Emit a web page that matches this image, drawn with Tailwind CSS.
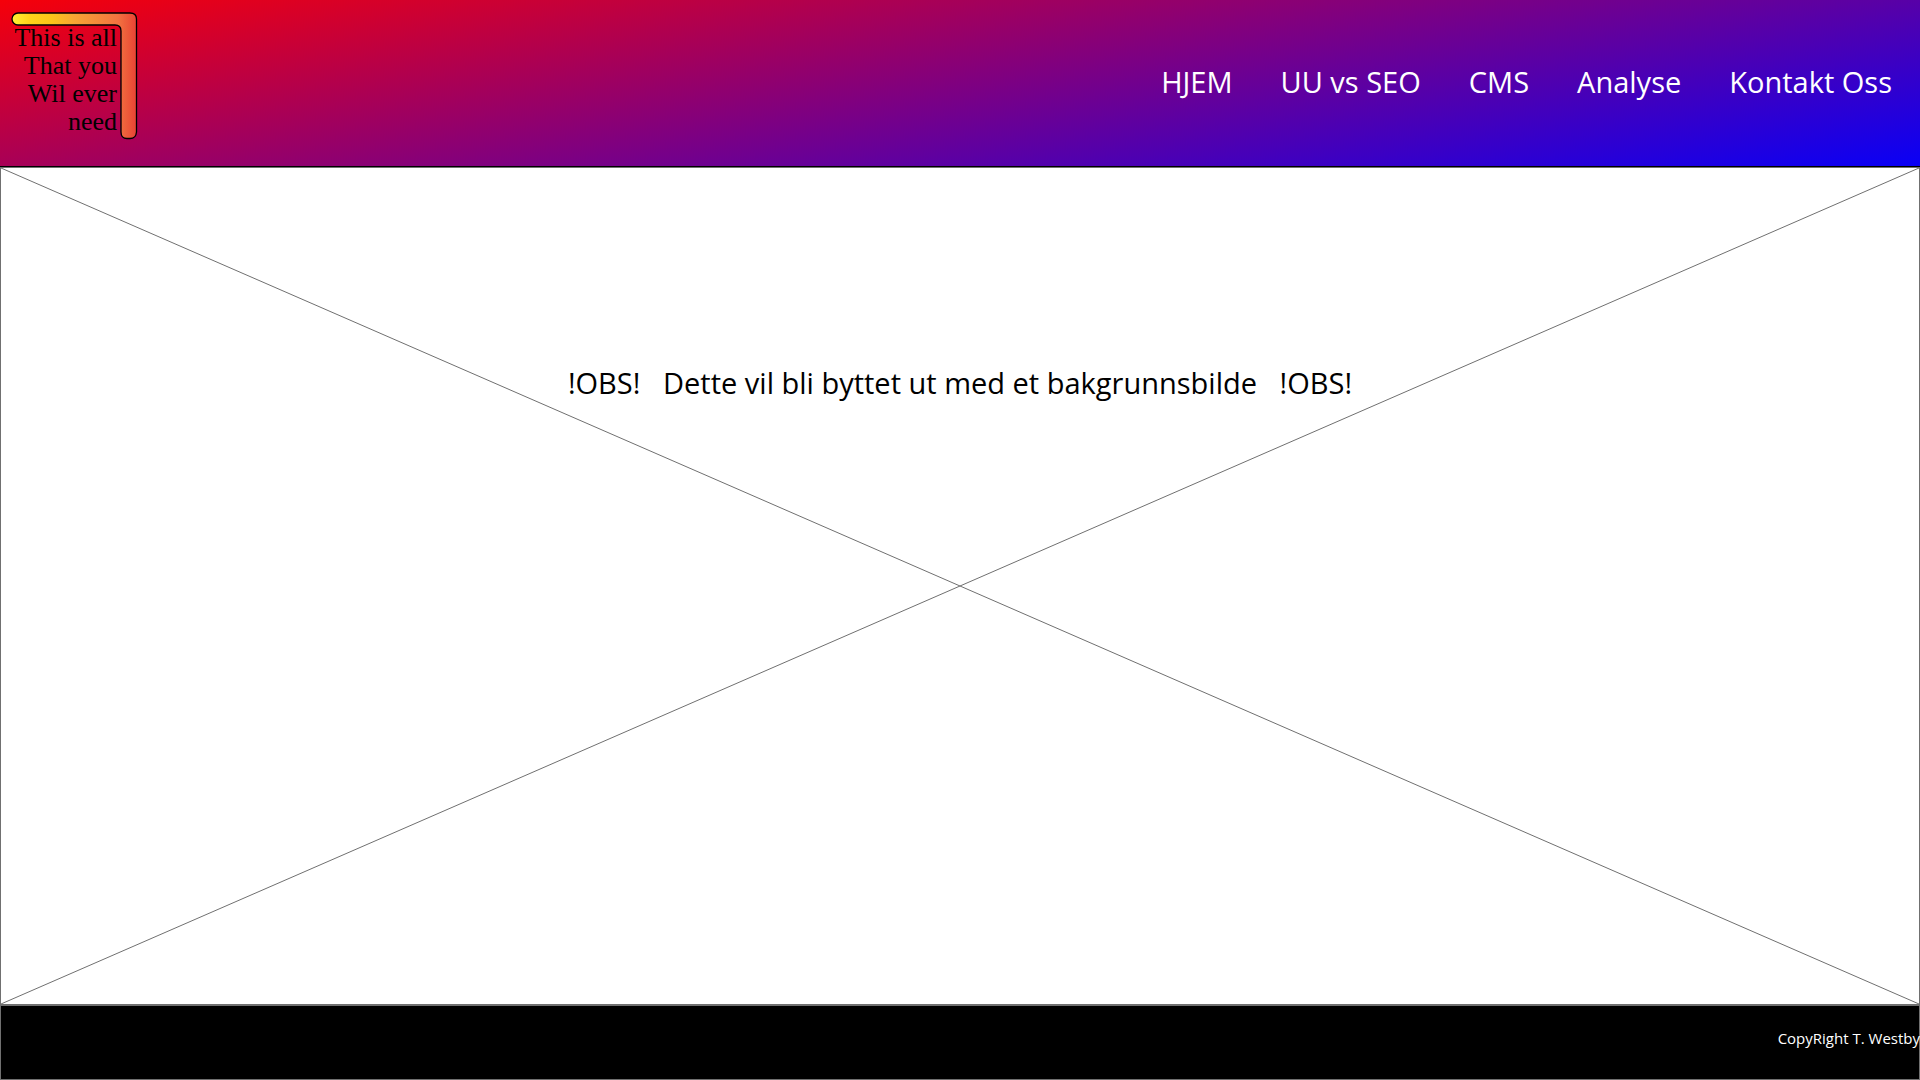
<!DOCTYPE html>
<html lang="no">
<head>
<meta charset="utf-8">
<meta name="viewport" content="width=device-width, initial-scale=1">
<title>Hjem</title>
<script src="https://cdn.jsdelivr.net/npm/@tailwindcss/browser@4"></script>
</head>
<body class="flex min-h-screen flex-col bg-white font-['Segoe_UI','Open_Sans',sans-serif] text-black">
  <header class="flex h-[167px] shrink-0 items-start justify-between border-b border-black bg-[linear-gradient(170deg,#ff0000_-4%,#0000ff_104%)] pr-7 pl-[11px]">
    <a href="#" class="relative mt-3 block h-32 w-[127px]">
      <svg class="absolute inset-0 h-full w-full" viewBox="0 0 127 128" aria-hidden="true">
        <defs>
          <linearGradient id="bar" x1="0" x2="1" y1="0" y2="0">
            <stop offset="0" stop-color="#fff033"/>
            <stop offset="0.14" stop-color="#ffd21a"/>
            <stop offset="0.32" stop-color="#fcc419"/>
            <stop offset="0.5" stop-color="#f7a534"/>
            <stop offset="0.85" stop-color="#f27340"/>
            <stop offset="1" stop-color="#e94334"/>
          </linearGradient>
        </defs>
        <path d="M7 1H119Q125.500 1 125.500 7V120Q125 126.500 119 126.500H116Q110 126.500 110 120V19Q110 13 104 13H7A6 6 0 0 1 7 1Z" fill="url(#bar)" stroke="#000" stroke-width="1.300"/>
      </svg>
      <span class="relative block pt-3 pr-[21px] text-right font-['Liberation_Serif',serif] text-[26px] leading-7 whitespace-nowrap">This is all<br>That you<br>Wil ever<br>need</span>
    </a>
    <nav class="mt-[62px] flex gap-12 text-[29px] leading-10 text-white">
      <a href="#">HJEM</a>
      <a href="#">UU vs SEO</a>
      <a href="#">CMS</a>
      <a href="#">Analyse</a>
      <a href="#">Kontakt Oss</a>
    </nav>
  </header>
  <main class="relative flex grow justify-center border border-[#707070]">
    <svg class="absolute inset-0 h-full w-full" viewBox="0 0 100 100" preserveAspectRatio="none" aria-hidden="true">
      <path d="M0 0L100 100M0 100L100 0" fill="none" stroke="#707070" stroke-width="1" vector-effect="non-scaling-stroke"/>
    </svg>
    <p class="relative mt-[195px] text-[29px] leading-10 whitespace-pre">!OBS!   Dette vil bli byttet ut med et bakgrunnsbilde   !OBS!</p>
  </main>
  <footer class="flex h-[75px] shrink-0 items-center justify-end border border-[#707070] bg-black text-[15px] text-white">
    <p class="-mr-px pb-2">CopyRight T. Westby</p>
  </footer>
</body>
</html>
